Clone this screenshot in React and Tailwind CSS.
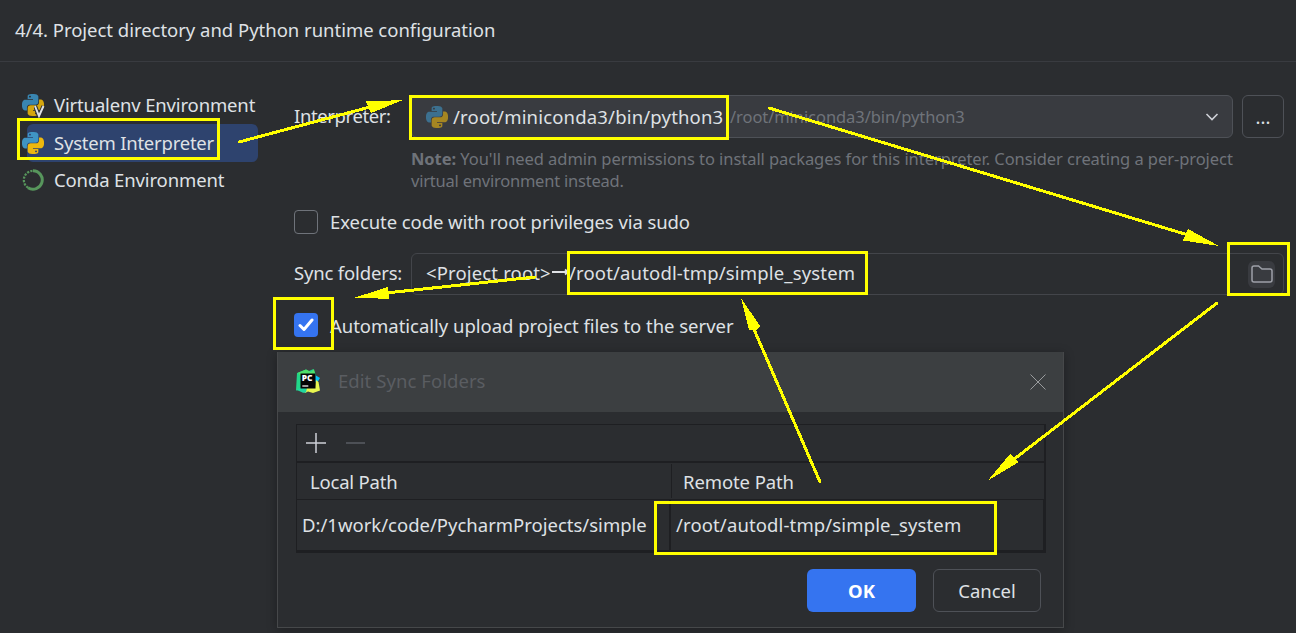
function PythonMark({ className }) {
  return (
    <svg viewBox="0 0 24 24" className={className}>
      <path
        fill="#3f94c4"
        d="M14.25.18l.9.2.73.26.59.3.45.32.34.34.25.34.16.33.1.3.04.26.02.2-.01.13V8.5l-.05.63-.13.55-.21.46-.26.38-.3.31-.33.25-.35.19-.35.14-.33.1-.3.07-.26.04-.21.02H8.77l-.69.05-.59.14-.5.22-.41.27-.33.32-.27.35-.2.36-.15.37-.1.35-.07.32-.04.27-.02.21v3.06H3.17l-.21-.03-.28-.07-.32-.12-.35-.18-.36-.26-.36-.36-.35-.46-.32-.59-.28-.73-.21-.88-.14-1.05-.05-1.23.06-1.22.16-1.04.24-.87.32-.71.36-.57.4-.44.42-.33.42-.24.4-.16.36-.1.32-.05.24-.01h.16l.06.01h8.16v-.83H6.18l-.01-2.75-.02-.37.05-.34.11-.31.17-.28.25-.26.31-.23.38-.2.44-.18.51-.15.58-.12.64-.1.71-.06.77-.04.84-.02 1.27.05zm-6.3 1.98l-.23.33-.08.41.08.41.23.34.33.22.41.09.41-.09.33-.22.23-.34.08-.41-.08-.41-.23-.33-.33-.22-.41-.09-.41.09z"
      />
      <path
        fill="#edb80f"
        d="M21.04 6.11l.28.06.32.12.35.18.36.27.36.35.35.47.32.59.28.73.21.88.14 1.04.05 1.23-.06 1.23-.16 1.04-.24.86-.32.71-.36.57-.4.45-.42.33-.42.24-.4.16-.36.09-.32.05-.24.02-.16-.01h-8.22v.82h5.84l.01 2.76.02.36-.05.34-.11.31-.17.29-.25.25-.31.24-.38.2-.44.17-.51.15-.58.13-.64.09-.71.07-.77.04-.84.01-1.27-.04-1.07-.14-.9-.2-.73-.25-.59-.3-.45-.33-.34-.34-.25-.34-.16-.33-.1-.3-.04-.25-.02-.2.01-.13v-5.34l.05-.64.13-.54.21-.46.26-.38.3-.32.33-.24.35-.2.35-.14.33-.1.3-.06.26-.04.21-.02.13-.01h5.84l.69-.05.59-.14.5-.21.41-.28.33-.32.27-.35.2-.36.15-.36.1-.35.07-.32.04-.28.02-.21V6.07h2.09l.14.01zm-6.47 14.25l-.23.33-.08.41.08.41.23.33.33.23.41.08.41-.08.33-.23.23-.33.08-.41-.08-.41-.23-.33-.33-.23-.41-.08-.41.08z"
      />
    </svg>
  );
}

function VirtualenvIcon() {
  return (
    <div className="relative h-[24px] w-[22px]">
      <PythonMark className="size-[22px] brightness-90" />
      <svg viewBox="0 0 12 14" className="absolute top-[10px] left-[12px] h-[14px] w-[12px]">
        <path d="M1 2 L5 12 L9.5 2" fill="none" stroke="#2b2d30" strokeWidth="4" />
        <path d="M1 2 L5 12 L9.5 2" fill="none" stroke="#dfe1e5" strokeWidth="2" />
      </svg>
    </div>
  );
}

function CondaIcon() {
  return (
    <svg viewBox="0 0 22 22" className="size-[22px]" fill="none" stroke="#57965c">
      <path d="M11 1.8 A9.200 9.200 0 1 1 6 18.700" strokeWidth="3" />
      <path d="M6 18.700 A9.200 9.200 0 0 1 11 1.8" strokeWidth="2.2" strokeDasharray="2.2 1.2" />
    </svg>
  );
}

function PyCharmIcon() {
  return (
    <svg viewBox="0 0 24 24" className="-mt-[2px] size-[24px]">
      <path d="M1 4 L10 0.500 L13 2 L17.500 0 L20 6 L13 12 L8 23.500 L4 21 L0 21.500 Z" fill="#21d789" />
      <path d="M2 3.800 L10 0.500 L15 3 L18 0.300 L19 5 L5 8 Z" fill="#4fe06a" />
      <path d="M19 6 L24 9 L21 14 L18 12 Z" fill="#07c3f2" />
      <path d="M20 11 L22.500 13 L24 21.500 L17 24 L12 22.500 L9 24 L6 19 L19 18 Z" fill="#e9f650" />
      <path d="M1 21 L5 18 L11 19 L10 23.500 L7 23.800 Z" fill="#21d7a0" />
      <rect x="4.500" y="4.500" width="15" height="15" fill="#050505" />
      <rect x="6.300" y="16.400" width="6" height="1.200" fill="#fff" />
      <text x="5.800" y="12" fontSize="8.4" fontWeight="800" fontFamily="'Open Sans', sans-serif" fill="#fff">PC</text>
    </svg>
  );
}

const highlights = [
  [18.5, 119.5, 200, 39],
  [410.5, 96.5, 317, 42],
  [568.5, 252.5, 298, 41],
  [1228.5, 243.5, 60, 51],
  [274.5, 298.5, 58, 50],
  [655.5, 502.5, 340, 51],
];

const arrows = [
  { line: "M239 142 L370 107", head: "403,100 366,101.5 371,113" },
  { line: "M769 108 L1188 235", head: "1219,246 1188,229 1183,240.5" },
  { line: "M535 277 L386 293", head: "355,297.5 388,287 389,299" },
  { line: "M820 482 L753 327", head: "741,298 760,326 757,330 749,330" },
  { line: "M1217 303 L1013 460", head: "988,480.5 1010,454 1019,462" },
];

function Annotations() {
  return (
    <svg viewBox="0 0 1296 633" className="pointer-events-none absolute inset-0 h-[633px] w-[1296px]" shapeRendering="crispEdges">
      {highlights.map(([x, y, w, h]) => (
        <rect key={`${x}-${y}`} x={x} y={y} width={w} height={h} fill="none" stroke="#ffff00" strokeWidth="3" />
      ))}
      {arrows.map(({ line, head }) => (
        <g key={line}>
          <path d={line} stroke="#ffff00" strokeWidth="3" strokeLinecap="round" fill="none" />
          <polygon points={head} fill="#ffff00" />
        </g>
      ))}
    </svg>
  );
}

function Sidebar() {
  return (
    <div className="flex w-[294px] shrink-0 flex-col pt-[25px]">
      <div className="flex h-[37px] items-center gap-[10px] pl-[22px]">
        <VirtualenvIcon />
        <span className="pb-[2px] tracking-[-0.15px]">Virtualenv Environment</span>
      </div>
      <div className="flex h-[38px] w-[258px] pl-[27px]">
        <div className="flex w-full items-center rounded-[6px] bg-[#2e436e]">
          <PythonMark className="-ml-[5px] size-[22px] shrink-0" />
          <span className="ml-[10px] tracking-[-0.22px]">System Interpreter</span>
        </div>
      </div>
      <div className="flex h-[38px] items-center gap-[10px] pl-[22px]">
        <div className="pb-[2px]">
          <CondaIcon />
        </div>
        <span className="pb-[2px] tracking-[-0.13px]">Conda Environment</span>
      </div>
    </div>
  );
}

function Settings() {
  return (
    <div className="flex w-[990px] flex-col pt-[33px]">
      <div className="flex h-[43px] items-center">
        <span className="w-[117px] pb-[2px] tracking-[-0.38px]">Interpreter:</span>
        <div className="flex h-full w-[822px] items-center rounded-[6px] border border-[#4e5157] bg-[#393b40] pr-[13px] pl-[14px]">
          <PythonMark className="size-[22px] shrink-0 opacity-60" />
          <span className="ml-[5px] w-[277px] tracking-[0.18px]">/root/miniconda3/bin/python3</span>
          <span className="text-[16.5px] tracking-[-0.07px] text-[#6f737a]">/root/miniconda3/bin/python3</span>
          <svg viewBox="0 0 14 8" className="mt-[1px] ml-auto h-[8px] w-[14px]" fill="none" stroke="#ced0d6" strokeWidth="1.6">
            <path d="M1.500 1 L7 6.500 L12.500 1" />
          </svg>
        </div>
        <div className="ml-[9px] flex h-full w-[42px] items-center justify-center rounded-[6px] border border-[#4e5157]">...</div>
      </div>
      <div className="mt-[10px] ml-[117px] text-[16.5px] leading-[22px] text-[#6f737a]">
        <p className="tracking-[-0.057px]"><b>Note:</b> You'll need admin permissions to install packages for this interpreter. Consider creating a per-project</p>
        <p className="tracking-[-0.22px]">virtual environment instead.</p>
      </div>
      <div className="mt-[17px] flex h-[26px] items-center gap-[12px]">
        <div className="size-[24px] rounded-[4px] border border-[#6f737a]" />
        <span className="tracking-[-0.08px]">Execute code with root privileges via sudo</span>
      </div>
      <div className="mt-[18px] flex h-[42px] items-center">
        <span className="w-[117px] pb-[2px] tracking-[-0.17px]">Sync folders:</span>
        <div className="flex h-full w-[873px] items-center rounded-[6px] border border-[#43454a] pr-[8px] pl-[14px]">
          <span className="w-[125px] pb-[2px] tracking-[0.15px]">&lt;Project root&gt;</span>
          <svg viewBox="0 0 18 8" className="mb-[4px] h-[8px] w-[18px]" fill="none" stroke="#dfe1e5" strokeWidth="1.8">
            <path d="M1 4 H17 M14 1.500 L17 4 L14 6.500" />
          </svg>
          <span className="pb-[2px] tracking-[0.16px]">/root/autodl-tmp/simple_system</span>
          <div className="ml-auto flex size-[27px] items-center justify-center rounded-[6px] bg-[#393b40]">
            <svg viewBox="0 0 22 18" className="h-[18px] w-[22px]" fill="none" stroke="#9da0a8" strokeWidth="1.500">
              <path d="M1 3 A2 2 0 0 1 3 1 H7.500 L11 4 H19 A2 2 0 0 1 21 6 V15 A2 2 0 0 1 19 17 H3 A2 2 0 0 1 1 15 Z" />
            </svg>
          </div>
        </div>
      </div>
      <div className="mt-[17px] flex h-[26px] items-center gap-[12px]">
        <div className="flex size-[24px] items-center justify-center rounded-[4px] bg-[#3574f0]">
          <svg viewBox="0 0 16 14" className="h-[14px] w-[16px]" fill="none" stroke="#fff" strokeWidth="3" strokeLinecap="round" strokeLinejoin="round">
            <path d="M2 7.500 L6 11.500 L14 2" />
          </svg>
        </div>
        <span className="pt-[2px] tracking-[-0.02px]">Automatically upload project files to the server</span>
      </div>
    </div>
  );
}

function SyncDialog() {
  return (
    <div className="ml-[277px] flex h-[276px] w-[787px] flex-col border border-t-0 border-[#46484a] bg-[#2b2d30] shadow-[0_2px_10px_rgba(0,0,0,0.3)]">
      <div className="flex h-[60px] shrink-0 items-center bg-[#3c3f41] pr-[17px] pl-[18px]">
        <PyCharmIcon />
        <span className="ml-[18px] pb-[2px] tracking-[0.06px] text-[#5a5d61]">Edit Sync Folders</span>
        <svg viewBox="0 0 16 16" className="ml-auto size-[16px]" stroke="#9a9c9e" strokeWidth="1">
          <path d="M0.500 0.500 L15.500 15.500 M15.500 0.500 L0.500 15.500" />
        </svg>
      </div>
      <div className="mt-[12px] ml-[18px] flex h-[129px] w-[750px] shrink-0 flex-col border-t border-r-2 border-b-[3px] border-l border-[#1e1f22]">
        <div className="flex h-[38px] shrink-0 items-center border-b-2 border-[#1e1f22] pl-[9px]">
          <svg viewBox="0 0 60 20" className="h-[20px] w-[60px]" strokeWidth="1.500">
            <path d="M10 0 V20 M0 10 H20" stroke="#ced0d6" />
            <path d="M40 10 H59" stroke="#5a5d63" />
          </svg>
        </div>
        <div className="flex h-[37px] shrink-0 items-center border-b border-[#1e1f22]">
          <div className="flex h-[34px] w-[375px] items-center border-r border-[#1e1f22] pt-[2px] pl-[13px] tracking-[-0.2px]">Local Path</div>
          <div className="pt-[2px] pl-[11px] tracking-[-0.1px]">Remote Path</div>
        </div>
        <div className="flex grow items-center border-r border-[#1e1f22]">
          <div className="flex h-full w-[374px] items-center border-r-2 border-[#1e1f22] pl-[5px]">D:/1work/code/PycharmProjects/simple</div>
          <div className="pl-[5px] tracking-[0.13px]">/root/autodl-tmp/simple_system</div>
        </div>
      </div>
      <div className="mt-[16px] flex h-[43px] justify-end gap-[17px] pr-[22px]">
        <div className="flex w-[109px] items-center justify-center rounded-[6px] bg-[#3574f0] font-bold text-white">OK</div>
        <div className="flex w-[108px] items-center justify-center rounded-[6px] border border-[#4e5157]">Cancel</div>
      </div>
    </div>
  );
}

export default function App() {
  return (
    <div className="relative flex h-[633px] w-[1296px] flex-col overflow-hidden bg-[#2b2d30] font-['Noto_Sans','Open_Sans',sans-serif] text-[18.5px] leading-[26px] whitespace-nowrap text-[#dfe1e5]">
      <header className="flex h-[62px] shrink-0 items-center border-b border-[#393b40] pb-[2px] pl-[15px] tracking-[-0.02px]">
        4/4. Project directory and Python runtime configuration
      </header>
      <main className="flex h-[290px] shrink-0">
        <Sidebar />
        <Settings />
      </main>
      <SyncDialog />
      <Annotations />
    </div>
  );
}
